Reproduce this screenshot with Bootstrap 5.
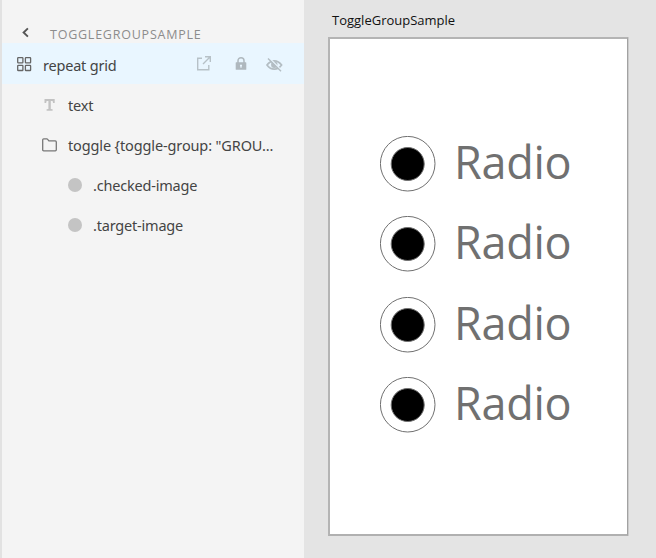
<!DOCTYPE html>
<html lang="en">
<head>
<meta charset="utf-8">
<meta name="viewport" content="width=device-width, initial-scale=1">
<title>ToggleGroupSample</title>
<link href="https://cdn.jsdelivr.net/npm/bootstrap@5.3.0/dist/css/bootstrap.min.css" rel="stylesheet">
<style>
body{background:#e4e4e4;font-family:"Open Sans","Noto Sans",sans-serif;height:558px;overflow:hidden}
.layers{width:304px;height:558px;background:#f4f4f4;border-left:2px solid #e2e2e2;color:#444;font-size:14.5px}
.layers svg{display:block;flex:none}
.layers-head{height:43px;padding:24px 0 0 19px;font-size:12.5px;line-height:22px;color:#8c8c8c}
.layers-head svg{margin-top:2px}
.layers-head span{margin-left:19px;letter-spacing:.77px}
.layer{height:40px;line-height:20px;white-space:nowrap;font-family:"Noto Sans","Open Sans",sans-serif}
.layer.selected{height:41px;background:#e9f6ff;padding:2px 0 0 15px;margin-bottom:1px}
.lv1{padding-left:40px}
.lv2{padding-left:66px}
.layer-name{letter-spacing:-.2px;margin-left:11px}
.layer-name.long{letter-spacing:-.13px}
.icons{margin-right:21px;margin-top:-2px}
.i-lock{margin-left:23px}
.i-eye{margin-left:19px}
.dot{width:14px;height:14px;background:#c4c4c4}
.board-title{font-size:13px;line-height:20px;padding:10px 0 0 4px;height:37px;color:#111}
.canvas-area{padding-left:24px}
.board{width:300px;height:499px;border:2px solid #b4b4b4;border-right:1px solid #a2a2a2;border-bottom-color:#b0b0b0;box-shadow:1px 0 #ccc;background:#fff;padding:97px 0 0 50px}
.option{height:80.3px}
.option-label{font-size:45px;line-height:51px;color:#707070;margin-left:18px;letter-spacing:-.3px}
</style>
</head>
<body>
<main class="d-flex">
<aside class="layers flex-shrink-0">
  <div class="layers-head d-flex">
    <svg width="10" height="12" viewBox="0 0 10 12"><path d="M6.900 2.400 2.600 6.500l4.300 4.100" fill="none" stroke="#555" stroke-width="1.900"/></svg>
    <span>TOGGLEGROUPSAMPLE</span>
  </div>
  <div class="layer selected d-flex align-items-center">
    <svg width="15" height="15" viewBox="0 0 15 15" fill="none" stroke="#666" stroke-width="1.300"><rect x=".7" y=".7" width="5.200" height="5.200" rx=".6"/><rect x="8.400" y=".7" width="5.200" height="5.200" rx=".6"/><rect x=".7" y="8.300" width="5.200" height="5.200" rx=".6"/><rect x="8.400" y="8.300" width="5.200" height="5.200" rx=".6"/></svg>
    <span class="layer-name">repeat grid</span>
    <div class="d-flex ms-auto icons">
      <svg width="15" height="16" viewBox="0 0 15 16" fill="none" stroke="#b7c1c7" stroke-width="1.400"><path d="M5 2.200H.7v11.600H11.800V9M8 .7H13.300V6M13 1 6 8"/></svg>
      <svg class="i-lock" width="12" height="16" viewBox="0 0 12 16"><path d="M3 7V4.700a3 3 0 0 1 6 0V7" fill="none" stroke="#afb8be" stroke-width="1.500"/><path fill-rule="evenodd" fill="#afb8be" d="M1.300 6.200h9.400q.6 0 .6.600v6.400q0 .6-.6.600H1.300q-.6 0-.6-.6V6.800q0-.6.6-.6ZM6 8.400a1.100 1.100 0 0 0-.6 2v1.300h1.200v-1.300a1.100 1.100 0 0 0-.6-2Z"/></svg>
      <svg class="i-eye" width="17" height="16" viewBox="0 0 17 16" fill="none" stroke="#b3bdc3"><path d="M1 9Q4 4.800 8.300 4.800T15.600 9Q12.500 13.200 8.300 13.200T1 9Z" stroke-width="1.700"/><circle cx="8.300" cy="8.800" r="3.200" fill="#b3bdc3" stroke="none"/><path d="M3.200 2.100 15.600 14.500" stroke="#e9f6ff" stroke-width="1.500"/><path d="M2 2.400 15 15.300" stroke-width="1.400"/></svg>
    </div>
  </div>
  <div class="layer lv1 d-flex align-items-center">
    <svg width="15" height="14" viewBox="0 0 15 14" fill="#c2c2c2"><path d="M2.500 1h10.200v3.900h-1.600l-.5-1.800H8.800v7.800l1.800.4v1.500h-6v-1.500l1.800-.4V3.100H4.600l-.5 1.800H2.500Z"/></svg>
    <span class="layer-name">text</span>
  </div>
  <div class="layer lv1 d-flex align-items-center">
    <svg width="15" height="14" viewBox="0 0 15 14"><path d="M.7 12.400V1.800Q.7 .8 1.700 .8h3q.6 0 1 .6l1.200 1.500h6.400q1 0 1 1v7.900q0 1-1 1H1.700q-1 0-1-1Z" fill="none" stroke="#777" stroke-width="1.300"/></svg>
    <span class="layer-name long">toggle {toggle-group: "GROU...</span>
  </div>
  <div class="layer lv2 d-flex align-items-center"><i class="dot rounded-circle"></i><span class="layer-name">.checked-image</span></div>
  <div class="layer lv2 d-flex align-items-center"><i class="dot rounded-circle"></i><span class="layer-name">.target-image</span></div>
</aside>
<section class="canvas-area">
  <div class="board-title">ToggleGroupSample</div>
  <div class="board">
    <div class="option d-flex align-items-start"><svg width="56" height="56" viewBox="0 0 56 56"><circle cx="27.700" cy="27.700" r="27.300" fill="#fff" stroke="#707070"/><circle cx="27.700" cy="28" r="16.500" stroke="#707070"/></svg><span class="option-label">Radio</span></div>
    <div class="option d-flex align-items-start"><svg width="56" height="56" viewBox="0 0 56 56"><circle cx="27.700" cy="27.700" r="27.300" fill="#fff" stroke="#707070"/><circle cx="27.700" cy="28" r="16.500" stroke="#707070"/></svg><span class="option-label">Radio</span></div>
    <div class="option d-flex align-items-start"><svg width="56" height="56" viewBox="0 0 56 56"><circle cx="27.700" cy="27.700" r="27.300" fill="#fff" stroke="#707070"/><circle cx="27.700" cy="28" r="16.500" stroke="#707070"/></svg><span class="option-label">Radio</span></div>
    <div class="option d-flex align-items-start"><svg width="56" height="56" viewBox="0 0 56 56"><circle cx="27.700" cy="27.700" r="27.300" fill="#fff" stroke="#707070"/><circle cx="27.700" cy="28" r="16.500" stroke="#707070"/></svg><span class="option-label">Radio</span></div>
  </div>
</section>
</main>
<script src="https://cdn.jsdelivr.net/npm/bootstrap@5.3.0/dist/js/bootstrap.bundle.min.js"></script>
</body>
</html>
